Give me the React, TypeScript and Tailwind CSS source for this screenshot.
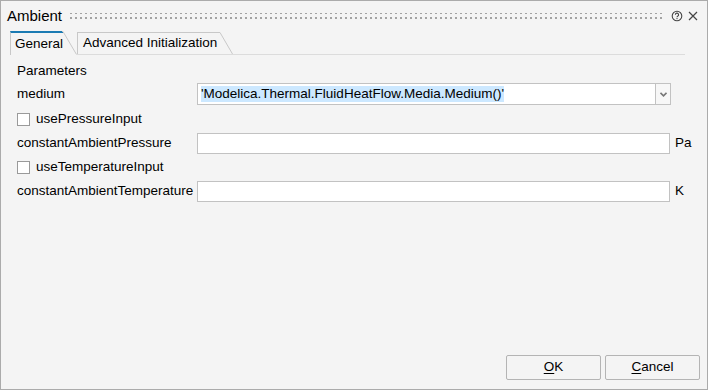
import React from "react";

function Grip() {
  return (
    <svg className="flex-1 h-[8px] mx-2" preserveAspectRatio="none">
      <defs>
        <pattern id="dots" width="5" height="5" patternUnits="userSpaceOnUse">
          <rect x="0" y="0" width="2" height="2" fill="#a3a3a3" />
        </pattern>
      </defs>
      <rect x="0" y="1" width="100%" height="7" fill="url(#dots)" />
    </svg>
  );
}

function Checkbox({ label }: { label: string }) {
  return (
    <div className="flex items-center h-[24px]">
      <span className="w-[13px] h-[13px] border border-[#9a9a9a] bg-white" />
      <span className="ml-[6px]">{label}</span>
    </div>
  );
}

function Field({ label, unit }: { label: string; unit: string }) {
  return (
    <div className="flex items-center h-[24px]">
      <span className="w-[180px] shrink-0">{label}</span>
      <div className="w-[473px] h-[21px] border border-[#c2c2c2] bg-white" />
      <span className="ml-[5px]">{unit}</span>
    </div>
  );
}

export default function App() {
  return (
    <div
      className="w-[708px] h-[390px] bg-[#f4f4f4] border border-[#ababab] flex flex-col text-[13.5px] text-black"
      style={{ fontFamily: '"Liberation Sans", Arial, sans-serif' }}
    >
      {/* title bar */}
      <div className="flex items-center h-[30px] pl-[6px] pr-[9px]">
        <span className="text-[15px]">Ambient</span>
        <Grip />
        <svg width="12" height="12" viewBox="0 0 12 12" className="mr-[5px]">
          <circle cx="6" cy="6" r="4.8" fill="none" stroke="#444" strokeWidth="1.1" />
          <path d="M4.4 4.8a1.6 1.6 0 1 1 2.2 1.4c-.5.3-.6.5-.6 1" fill="none" stroke="#444" strokeWidth="1.1" />
          <circle cx="6" cy="8.6" r="0.7" fill="#444" />
        </svg>
        <svg width="10" height="10" viewBox="0 0 10 10">
          <path d="M1 1L9 9M9 1L1 9" stroke="#444" strokeWidth="1.2" />
        </svg>
      </div>

      {/* tabs */}
      <div className="flex items-end h-[24px] pl-[9px] pr-[22px]">
        <div className="flex items-end h-[24px]">
          <div className="h-[24px] border-l border-[#c8c8c8] border-t-2 border-t-[#1b7bb3] pl-[4px] pr-0 flex items-center">
            General
          </div>
          <svg width="15" height="24" viewBox="0 0 15 24" className="-ml-px">
            <path d="M0 0.5L1 0.5L14.5 23.5" fill="none" stroke="#c8c8c8" />
          </svg>
        </div>
        <div className="flex items-end h-[22px] flex-1 border-b border-[#dcdcdc]">
          <div className="flex items-end h-[22px]">
            <div className="h-[22px] border-l border-t border-[#c8c8c8] pl-[5px] pr-[3px] flex items-center">
              Advanced Initialization
            </div>
            <svg width="14" height="22" viewBox="0 0 14 22" className="-ml-px">
              <path d="M0 0.5L1 0.5L13.5 22" fill="none" stroke="#c8c8c8" />
            </svg>
          </div>
        </div>
      </div>

      {/* parameters */}
      <div className="flex flex-col pl-[16px] pt-[6px]">
        <div className="h-[20px] flex items-center">Parameters</div>
        <div className="flex items-center h-[26px]">
          <span className="w-[180px] shrink-0">medium</span>
          <div className="w-[459px] h-[22px] border border-[#c2c2c2] bg-white flex items-center px-[3px]">
            <span className="bg-[#cce8ff] leading-[16px]">
              'Modelica.Thermal.FluidHeatFlow.Media.Medium()'
            </span>
          </div>
          <div className="w-[15px] h-[22px] border border-l-0 border-[#c2c2c2] bg-[#f7f7f7] flex items-center justify-center">
            <svg width="7" height="5" viewBox="0 0 7 5">
              <path d="M0.5 0.8L3.5 3.8L6.5 0.8" fill="none" stroke="#777" strokeWidth="1.6" />
            </svg>
          </div>
        </div>
        <Checkbox label="usePressureInput" />
        <Field label="constantAmbientPressure" unit="Pa" />
        <Checkbox label="useTemperatureInput" />
        <Field label="constantAmbientTemperature" unit="K" />
      </div>

      <div className="flex-1" />

      {/* buttons */}
      <div className="flex justify-end gap-[4px] pr-[7px] pb-[9px]">
        <button className="w-[95px] h-[25px] border border-[#b4b4b4] rounded-[2px] bg-[#f4f4f4]">
          <span className="underline underline-offset-2">O</span>K
        </button>
        <button className="w-[95px] h-[25px] border border-[#b4b4b4] rounded-[2px] bg-[#f4f4f4]">
          <span className="underline underline-offset-2">C</span>ancel
        </button>
      </div>
    </div>
  );
}
